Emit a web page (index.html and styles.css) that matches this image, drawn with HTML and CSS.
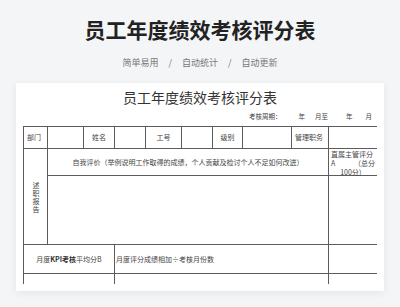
FILE: index.html
```html
<!DOCTYPE html>
<html lang="zh-CN">
<head>
<meta charset="utf-8">
<title>员工年度绩效考核评分表</title>
<link rel="stylesheet" href="styles.css">
</head>
<body>
<header class="hero">
  <h1 class="hero-title">员工年度绩效考核评分表</h1>
  <p class="hero-sub"><span>简单易用</span><i class="sep">/</i><span>自动统计</span><i class="sep">/</i><span>自动更新</span></p>
</header>
<main class="card">
  <h2 class="doc-title">员工年度绩效考核评分表</h2>
  <div class="period">
    <span>考核周期：</span><span class="p1">年</span><span class="p2">月至</span><span class="p3">年</span><span class="p4">月</span>
  </div>
  <div class="sheet">
    <div class="c left">部门</div>
    <div class="c"></div>
    <div class="c">姓名</div>
    <div class="c"></div>
    <div class="c">工号</div>
    <div class="c"></div>
    <div class="c">级别</div>
    <div class="c"></div>
    <div class="c left">管理职务</div>
    <div class="c"></div>

    <div class="c report"><span class="vert">述职报告</span></div>
    <div class="c wide">自我评价（举例说明工作取得的成绩，个人贡献及检讨个人不足如何改进）</div>
    <div class="c score">
      <div>直属主管评分</div>
      <div class="split"><span>A</span><span>（总分</span></div>
      <div class="mid">100分）</div>
    </div>
    <div class="c wide"></div>
    <div class="c"></div>

    <div class="c first3">月度<b>KPI考核</b>平均分B</div>
    <div class="c wide2 left2">月度评分成绩相加÷考核月份数</div>
    <div class="c"></div>

    <div class="c first3"></div>
    <div class="c wide2"></div>
    <div class="c"></div>
  </div>
</main>
</body>
</html>
```
FILE: styles.css
```css
* { box-sizing: border-box; margin: 0; padding: 0; }

body {
  background: #f4f5f7;
  font-family: "Noto Sans CJK SC", "Noto Sans", sans-serif;
  color: #333;
  width: 400px;
  height: 307px;
  overflow: hidden;
}

.hero {
  padding-top: 17px;
  text-align: center;
}

.hero-title {
  font-size: 21px;
  line-height: 24px;
  font-weight: 700;
  color: #222;
}

.hero-sub {
  margin-top: 16px;
  font-size: 9px;
  line-height: 12px;
  color: #777;
  display: flex;
  justify-content: center;
}

.sep {
  font-style: normal;
  margin: 0 10px;
}

.card {
  margin: 14px 16px 0;
  height: 208px;
  background: #fff;
  box-shadow: 0 2px 8px rgba(0, 0, 0, 0.07);
  padding: 5px 7px 0;
  overflow: hidden;
}

.doc-title {
  font-size: 14px;
  line-height: 18px;
  font-weight: 400;
  text-align: center;
  color: #333;
}

.period {
  margin-top: 6px;
  display: flex;
  justify-content: flex-end;
  padding-right: 5px;
  font-size: 6.5px;
  line-height: 9px;
  color: #444;
}

.p1 { margin-left: 17px; }
.p2 { margin-left: 10px; }
.p3 { margin-left: 18px; }
.p4 { margin-left: 13px; }

.sheet {
  margin-top: 5px;
  display: grid;
  grid-template-columns: 23px 35px 30px 30px 35px 30px 29px 48px 36px 48px;
  grid-template-rows: 21px 26px 68px 28px 10px;
  gap: 1px;
  padding: 1px 1px 0;
  background: #5c5c5c;
  font-size: 7px;
  line-height: 9px;
  color: #444;
}

.c {
  background: #fff;
  display: flex;
  align-items: center;
  justify-content: center;
  white-space: nowrap;
}

.left { justify-content: flex-start; padding-left: 3px; }

.report {
  grid-row: span 2;
  padding-top: 2px;
}

.vert {
  writing-mode: vertical-rl;
  text-orientation: upright;
  letter-spacing: 1px;
  line-height: 9px;
}

.wide { grid-column: span 8; }

.score {
  flex-direction: column;
  align-items: stretch;
  padding: 2px 2px 0;
  line-height: 9px;
}

.split {
  display: flex;
  justify-content: space-between;
}

.mid { text-align: center; }

.first3 { grid-column: span 3; }

.wide2 { grid-column: span 6; }

.left2 { justify-content: flex-start; padding-left: 1px; }

b { font-weight: 700; color: #333; }
```
